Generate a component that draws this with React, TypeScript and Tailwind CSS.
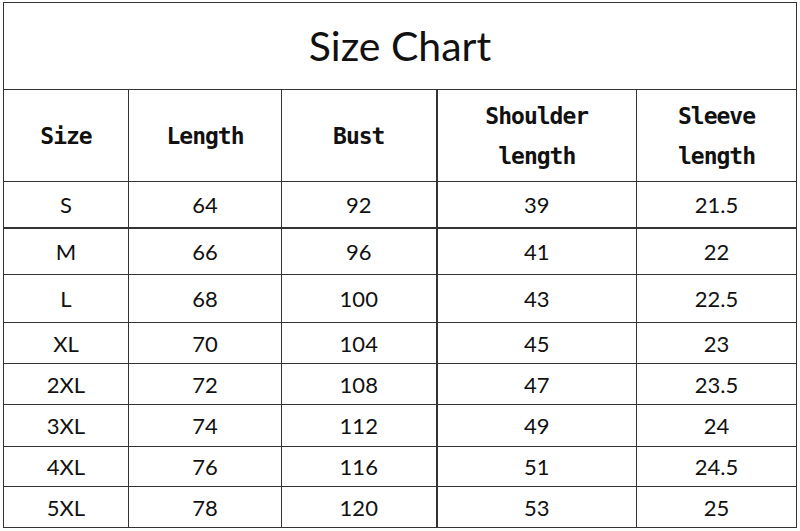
import React from 'react';

const rows: [string, string, string, string, string, number][] = [
  ['S', '64', '92', '39', '21.5', 46],
  ['M', '66', '96', '41', '22', 47],
  ['L', '68', '100', '43', '22.5', 48],
  ['XL', '70', '104', '45', '23', 41],
  ['2XL', '72', '108', '47', '23.5', 41],
  ['3XL', '74', '112', '49', '24', 42],
  ['4XL', '76', '116', '51', '24.5', 40],
  ['5XL', '78', '120', '53', '25', 41],
];

const head = "font-['DejaVu_Sans_Mono',monospace] font-bold text-[23px] tracking-[-1px] leading-[40px] text-[#111]";

export default function App() {
  return (
    <div className="w-[800px] h-[531px] bg-white pt-[2px] pl-[3px] overflow-hidden">
      <table className="table-fixed border-collapse w-[793px] text-center">
        <colgroup>
          <col className="w-[125px]" />
          <col className="w-[153px]" />
          <col className="w-[155px]" />
          <col className="w-[200px]" />
          <col className="w-[160px]" />
        </colgroup>
        <tbody>
          <tr className="h-[87px]">
            <td colSpan={5} className="border border-[#333] font-['Lato',sans-serif] text-[41px] text-[#111] align-middle">
              Size Chart
            </td>
          </tr>
          <tr className="h-[92px]">
            <td className={`border border-[#333] ${head}`}>Size</td>
            <td className={`border border-[#333] ${head}`}>Length</td>
            <td className={`border border-[#333] border-r-2 ${head}`}>Bust</td>
            <td className={`border border-[#333] ${head}`}>Shoulder<br />length</td>
            <td className={`border border-[#333] ${head}`}>Sleeve<br />length</td>
          </tr>
          {rows.map(([size, len, bust, sh, sl, h], i) => (
            <tr key={size} style={{ height: h }}>
              {[size, len, bust, sh, sl].map((v, j) => (
                <td
                  key={j}
                  className={`border border-[#333] font-['Lato',sans-serif] text-[22px] text-[#111] ${i === 0 ? 'border-b-2' : ''} ${j === 2 ? 'border-r-2' : ''}`}
                >
                  {v}
                </td>
              ))}
            </tr>
          ))}
        </tbody>
      </table>
    </div>
  );
}
